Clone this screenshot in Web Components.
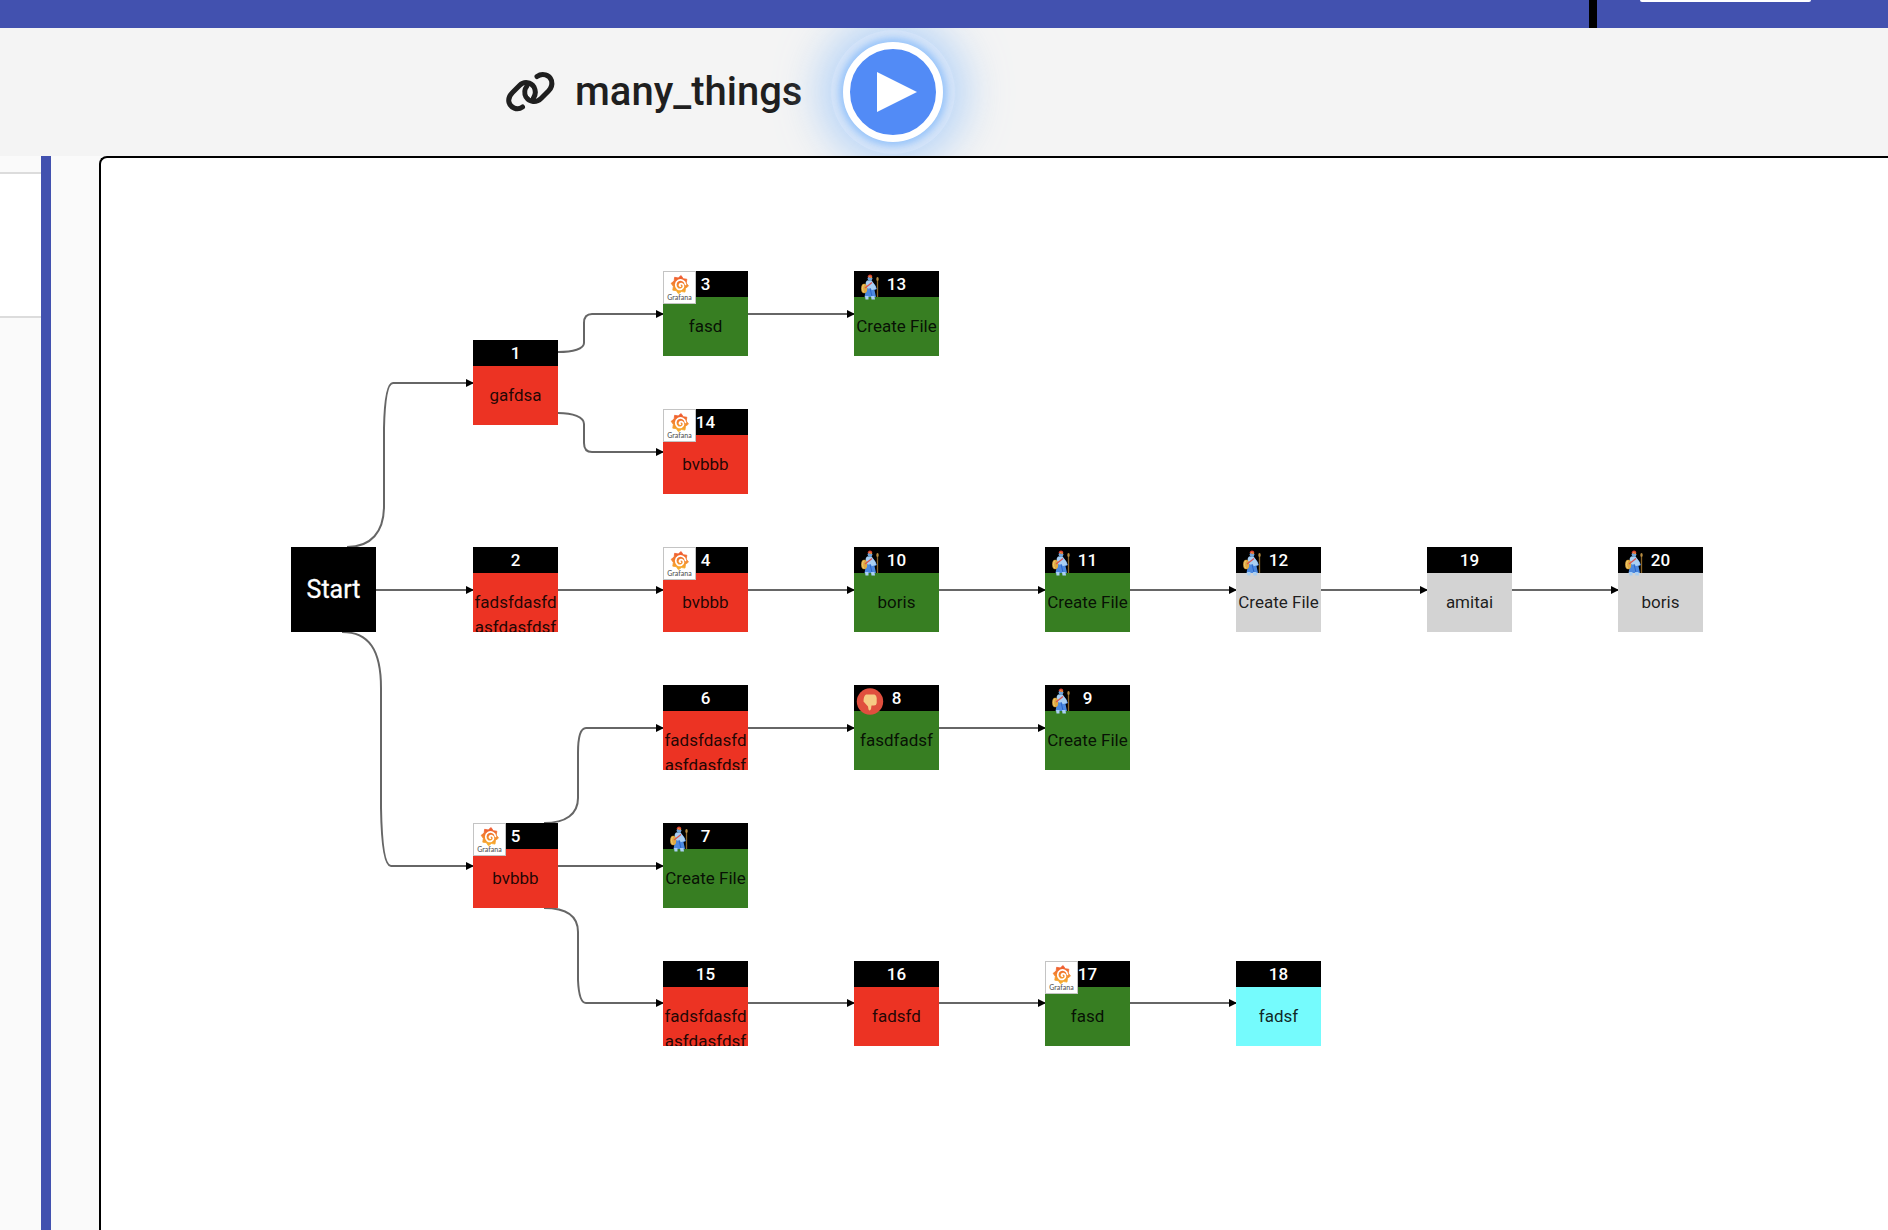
<!DOCTYPE html>
<html lang="en">
<head>
<meta charset="utf-8">
<title>many_things</title>
<style>
  html, body { margin: 0; height: 100%; overflow: hidden; }
  body { font-family: Roboto, sans-serif; background: #fafafa; color: #212121; }
</style>
</head>
<body>
<workflow-page></workflow-page>

<template id="page-template">
  <style>
    :host { display: flex; flex-direction: column; height: 100vh; }
    .body { display: flex; flex: 1; min-height: 0; }
    flow-canvas { flex: 1; margin-left: 48px; }
  </style>
  <top-bar></top-bar>
  <title-bar>many_things</title-bar>
  <div class="body">
    <side-list></side-list>
    <flow-canvas></flow-canvas>
  </div>
</template>

<template id="top-template">
  <style>
    :host { display: flex; justify-content: flex-end; height: 28px; flex: none; background: #4251af; }
    .tools { box-sizing: border-box; width: 299px; border-left: 8px solid #000; padding-left: 43px; }
    .field { width: 171px; height: 2px; background: #fff; border-radius: 0 0 4px 4px; }
  </style>
  <div class="tools"><div class="field"></div></div>
</template>

<template id="title-template">
  <style>
    :host { display: flex; align-items: center; height: 128px; flex: none; box-sizing: border-box;
      padding-left: 504px; background: #f4f4f4; overflow: hidden; }
    .link { width: 52px; height: 52px; margin-top: -4px; }
    h1 { margin: 0 41px 0 19px; font-size: 40px; line-height: 48px; font-weight: 500; color: #1f1f1f; }
    button { width: 100px; height: 100px; box-sizing: border-box; padding: 0; border: 7px solid #fff;
      border-radius: 50%; background: #528bf6; flex: none;
      box-shadow: 0 0 6px 4px rgba(120,180,250,.6), 0 0 0 12px rgba(215,230,250,.7), 0 0 44px 22px rgba(150,195,250,.7); }
    button svg { display: block; width: 86px; height: 86px; }
  </style>
  <svg class="link" viewBox="0 0 52 52" fill="none" stroke="#1f1f1f" stroke-width="5" stroke-linecap="round" aria-hidden="true">
    <path d="M18.500 43 C13 47 6.500 43.500 5 38.500 C4 34.500 5.500 31.500 8.500 28.500 L15.500 21.500 C20 17 27 18 30 23 C32 27 31.500 31 29.500 34"/>
    <path d="M33 12.500 C38.500 8.500 45.500 11 47.500 16.500 C48.500 20.500 47.500 24 44.500 27 L37 34.500 C32.500 39 25.500 38.500 22 33 C20 29.500 20.500 25 23 22"/>
  </svg>
  <h1><slot></slot></h1>
  <button type="button" aria-label="Run">
    <svg viewBox="0 0 86 86" aria-hidden="true"><path d="M27 23 L67 43 L27 63 Z" fill="#fff"/></svg>
  </button>
</template>

<template id="side-template">
  <style>
    :host { display: block; width: 41px; flex: none; padding-top: 16px; background: #fafafa; border-right: 10px solid #4251af; }
    .card { height: 142px; background: #fff; border: solid #dcdcdc; border-width: 2px 0; }
  </style>
  <div class="card"></div>
</template>

<template id="canvas-template">
  <style>
    :host { display: block; position: relative; background: #fff; overflow: hidden;
      border: 2px solid #000; border-width: 2px 0 0 2px; border-top-left-radius: 8px; }
    .edges { position: absolute; inset: 0; width: 100%; height: 100%; }
    flow-node { position: absolute; }
  </style>
  <svg class="edges" aria-hidden="true">
    <defs>
      <marker id="tip" markerUnits="userSpaceOnUse" markerWidth="8" markerHeight="10" refX="7" refY="4.500" orient="auto"><path d="M0 0.500 L8 4.500 L0 8.500 Z"/></marker>
    </defs>
    <g fill="none" stroke="#666" stroke-width="2"></g>
  </svg>
</template>

<template id="node-template">
  <style>
    :host { display: block; width: 85px; height: 85px; overflow: hidden; background: var(--fill); }
    header { height: 26px; background: #000; color: #fff; font-size: 17px; line-height: 27px; font-weight: 500; text-align: center; }
    header span { position: relative; }
    p { margin: 17px 0 0; font-size: 17px; line-height: 25px; text-align: center; overflow-wrap: anywhere; color: rgba(0,0,0,.87); }
    .icon { position: absolute; left: 0; top: 0; }
    :host([kind="start"]) { display: flex; align-items: center; justify-content: center; }
    :host([kind="start"]) header { display: none; }
    :host([kind="start"]) p { margin: 0; color: #fff; font-size: 25px; -webkit-text-stroke: 0.3px #fff; }
  </style>
  <header><flow-icon class="icon"></flow-icon><span></span></header>
  <p><slot></slot></p>
</template>

<script>
  const stamp = id => document.importNode(document.getElementById(id).content, true);
  const simple = (name, id) => customElements.define(name, class extends HTMLElement {
    constructor() { super(); this.attachShadow({ mode: 'open' }).append(stamp(id)); }
  });

  const gear = Array.from({ length: 16 }, (_, i) => {
    const a = i * Math.PI / 8 + 0.15, r = i % 2 ? 7 : 9.2;
    return (16.8 + r * Math.cos(a) * 0.95).toFixed(2) + ',' + (13.7 + r * Math.sin(a)).toFixed(2);
  }).join(' ');

  const icons = {
    grafana: `<rect x="0.500" y="0.500" width="32" height="32" fill="#fff" stroke="#c4c4c4"/>
      <defs><linearGradient id="g" x1="0" y1="0" x2="0" y2="1"><stop offset="0" stop-color="#ee5530"/><stop offset="1" stop-color="#f8b52c"/></linearGradient></defs>
      <polygon points="${gear}" fill="url(#g)" stroke="url(#g)" stroke-linejoin="round" stroke-width=".8"/>
      <path d="M22.500 13.500 C22 9.500 18 8 15.200 9.500 C12 11.200 12 15.800 14.500 17.700 C17 19.300 20.500 18 20.500 15.200 C20.500 12.800 17.800 12 16.600 13.600 C16.200 14.400 16.700 15.200 17.400 15.200" fill="none" stroke="#fff" stroke-width="1.700" stroke-linecap="round"/>
      <text x="16.500" y="28.500" text-anchor="middle" font-family="Lato, sans-serif" font-size="7" fill="#555">Grafana</text>`,
    guard: `<path d="M23.500 8 V26" stroke="#8a6427" stroke-width="1.300"/><ellipse cx="23.500" cy="8" rx="1.200" ry="2" fill="#b78d43"/>
      <path d="M12.500 10 L17.500 9.500 L21 14 L23 18 L20.500 19 L22 26 H10.500 L12 18 Z" fill="#4c89df"/>
      <path d="M13 9.500 L17.500 9.500 L21.500 15 L22 18 L18.500 19 L13 17 L11.500 12 Z" fill="#a9cff3"/>
      <ellipse cx="10.200" cy="17.500" rx="3" ry="4.700" fill="#e0aa42"/><path d="M9.500 14 C8.300 16 8.300 19 9.500 21" fill="none" stroke="#f2ce75"/>
      <path d="M11 17 L18 11.500" stroke="#d95450" stroke-width="1.300"/>
      <path d="M16 17 L18 25.500" stroke="#2b65c9" stroke-width="1"/>
      <path d="M11 25 H14.500 V28.500 H11.500 Z M17 25 H20.500 L21 28.500 H17.500 Z" fill="#a9cff3"/>
      <circle cx="16" cy="7.500" r="2.400" fill="#70a7dd"/><path d="M13.600 6 C13.800 2.800 18 2.600 18.300 5.800 L17.400 7.200 Z" fill="#dc4435"/><path d="M15 5.500 L18 6.500" stroke="#e7a63d"/>`,
    down: `<circle cx="16" cy="16.500" r="13.200" fill="#e04f3e"/><path d="M12 9.500 H20.500 Q22.500 10 22.700 13 V18 Q22.500 20.500 20 20.500 H17.500 L17 24 Q16 26.500 14.500 24.500 L14 21.500 L9.500 16.500 Q9.500 11 12 9.500 Z" fill="#f6cb84"/>`
  };

  customElements.define('flow-icon', class extends HTMLElement {
    constructor() { super(); this.attachShadow({ mode: 'open' }); }
    set name(key) {
      this.shadowRoot.innerHTML = `<style>:host{display:block}svg{display:block}</style>` +
        (icons[key] ? `<svg width="33" height="33" viewBox="0 0 33 33" aria-hidden="true">${icons[key]}</svg>` : '');
    }
  });

  customElements.define('flow-node', class extends HTMLElement {
    constructor() { super(); this.attachShadow({ mode: 'open' }).append(stamp('node-template')); }
    set data(d) {
      this.style.cssText = `left:${d.x}px;top:${d.y}px;--fill:${d.fill}`;
      if (d.start) this.setAttribute('kind', 'start');
      this.shadowRoot.querySelector('span').textContent = d.id;
      this.shadowRoot.querySelector('flow-icon').name = d.icon;
      this.textContent = d.label;
    }
  });

  const col = [190, 372, 562, 753, 944, 1135, 1326, 1517];
  const red = '#ec3323', green = '#377e22', gray = '#d3d3d3', cyan = '#75fbfd';
  const long = 'fadsfdasfdasfdasfdsf';
  const nodes = [
    [1, 1, 182, red, 'gafdsa'], [3, 2, 113, green, 'fasd', 'grafana'], [13, 3, 113, green, 'Create File', 'guard'],
    [14, 2, 251, red, 'bvbbb', 'grafana'], [2, 1, 389, red, long], [4, 2, 389, red, 'bvbbb', 'grafana'],
    [10, 3, 389, green, 'boris', 'guard'], [11, 4, 389, green, 'Create File', 'guard'], [12, 5, 389, gray, 'Create File', 'guard'],
    [19, 6, 389, gray, 'amitai'], [20, 7, 389, gray, 'boris', 'guard'], [6, 2, 527, red, long],
    [8, 3, 527, green, 'fasdfadsf', 'down'], [9, 4, 527, green, 'Create File', 'guard'], [5, 1, 665, red, 'bvbbb', 'grafana'],
    [7, 2, 665, green, 'Create File', 'guard'], [15, 2, 803, red, long], [16, 3, 803, red, 'fadsfd'],
    [17, 4, 803, green, 'fasd', 'grafana'], [18, 5, 803, cyan, 'fadsf']
  ];
  const straight = [[2, 156], [0, 432], [1, 432], [2, 432], [3, 432], [4, 432], [5, 432], [6, 432],
    [2, 570], [3, 570], [1, 708], [2, 845], [3, 845], [4, 845]];
  const curves = [
    'M246 389 C270 389 283 374 283 348 V270 Q284 225 292 225 H372',
    'M241 474 C268 474 280 492 280 530 V650 Q281 708 290 708 H372',
    'M457 194 C472 194 483 191 483 185 V165 Q483 156 491 156 H562',
    'M457 255 C472 255 483 259 483 266 V285 Q483 294 491 294 H562',
    'M443 665 C465 665 477 656 477 640 V595 Q477 570 485 570 H562',
    'M443 750 C465 750 477 758 477 774 V822 Q478 845 485 845 H562'
  ];

  customElements.define('flow-canvas', class extends HTMLElement {
    constructor() {
      super();
      const root = this.attachShadow({ mode: 'open' });
      root.append(stamp('canvas-template'));
      const g = root.querySelector('g');
      for (const d of [...curves, ...straight.map(([c, y]) => `M${col[c] + 85} ${y} H${col[c + 1]}`)]) {
        const path = document.createElementNS('http://www.w3.org/2000/svg', 'path');
        path.setAttribute('d', d);
        path.setAttribute('marker-end', 'url(#tip)');
        g.append(path);
      }
      const add = data => { const n = document.createElement('flow-node'); n.data = data; root.append(n); };
      add({ id: '', x: col[0], y: 389, fill: '#000', label: 'Start', start: true });
      for (const [id, c, y, fill, label, icon] of nodes) add({ id, x: col[c], y, fill, label, icon });
    }
  });

  simple('top-bar', 'top-template');
  simple('title-bar', 'title-template');
  simple('side-list', 'side-template');
  simple('workflow-page', 'page-template');
</script>
</body>
</html>
